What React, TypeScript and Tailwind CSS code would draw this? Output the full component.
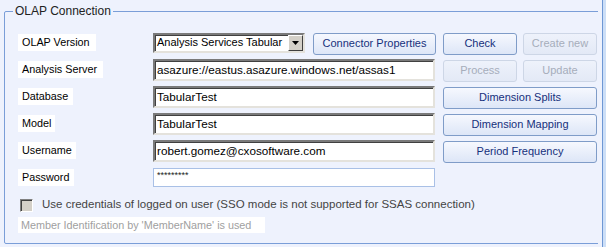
import React from 'react';

const font = { fontFamily: '"Liberation Sans", Arial, sans-serif' };

function Label({ text, w }: { text: string; w: string }) {
  return (
    <div className={`h-[17px] bg-white pl-[4px] text-[10.8px] leading-[17px] text-black whitespace-nowrap ${w}`}>
      {text}
    </div>
  );
}

function SunkenInput({ value }: { value: string }) {
  return (
    <div className="w-[282px] h-[22px] bg-white border-2 border-t-[#7a7a7a] border-l-[#7a7a7a] border-b-[#e4e2dc] border-r-[#e4e2dc] shadow-[inset_1px_1px_0_#404040] pl-[2px] text-[11.7px] leading-[18px] text-black whitespace-nowrap overflow-hidden">
      {value}
    </div>
  );
}

function Btn({ text, w, disabled }: { text: string; w: string; disabled?: boolean }) {
  return (
    <button
      className={`h-[22px] ${w} rounded-[3px] border text-[11px] leading-none ${
        disabled
          ? 'border-[#cdd6e6] bg-gradient-to-b from-[#eef2fb] to-[#e3e9f6] text-[#a6adbb]'
          : 'border-[#7f9cc8] bg-gradient-to-b from-[#f6f8fe] to-[#dde6f7] text-[#16307c]'
      }`}
    >
      {text}
    </button>
  );
}

export default function App() {
  return (
    <div className="flex w-[606px] h-[247px] overflow-hidden" style={font}>
      <div className="w-[602px] h-[247px] bg-[#eef2fd] overflow-hidden">
        <div className="w-[598px] overflow-hidden pl-[4px] pt-[4px]">
          <fieldset className="w-[600px] h-[240px] border border-[#7a9ed8] rounded-[2px]">
            <legend className="ml-[8px] px-[2px] text-[12px] leading-[14px] text-[#222]">OLAP Connection</legend>
            <div className="flex flex-col pt-[11px]">
              {/* row 1 */}
              <div className="flex items-center h-[27px] pl-[13px]">
                <div className="w-[135px]"><Label text="OLAP Version" w="w-[78px]" /></div>
                <div className="w-[152px] h-[20px] bg-white border-2 border-t-[#7a7a7a] border-l-[#7a7a7a] border-b-[#e4e2dc] border-r-[#e4e2dc] shadow-[inset_1px_1px_0_#404040] flex items-center">
                  <span className="flex-1 min-w-0 pl-[2px] text-[11px] text-black whitespace-nowrap">Analysis Services Tabular</span>
                  <span className="shrink-0 w-[15px] h-[16px] bg-[#d4d0c8] border border-t-white border-l-white border-r-[#404040] border-b-[#404040] flex items-center justify-center">
                    <svg width="7" height="4" viewBox="0 0 7 4"><path d="M0 0h7L3.5 4z" fill="#000" /></svg>
                  </span>
                </div>
                <div className="ml-[8px]"><Btn text="Connector Properties" w="w-[123px]" /></div>
                <div className="ml-[7px]"><Btn text="Check" w="w-[74px]" /></div>
                <div className="ml-[6px]"><Btn text="Create new" w="w-[74px]" disabled /></div>
              </div>
              {/* row 2 */}
              <div className="flex items-center h-[27px] pl-[13px]">
                <div className="w-[135px]"><Label text="Analysis Server" w="w-[85px]" /></div>
                <SunkenInput value="asazure://eastus.asazure.windows.net/assas1" />
                <div className="ml-[8px]"><Btn text="Process" w="w-[74px]" disabled /></div>
                <div className="ml-[6px]"><Btn text="Update" w="w-[74px]" disabled /></div>
              </div>
              {/* row 3 */}
              <div className="flex items-center h-[27px] pl-[13px]">
                <div className="w-[135px]"><Label text="Database" w="w-[55px]" /></div>
                <SunkenInput value="TabularTest" />
                <div className="ml-[8px]"><Btn text="Dimension Splits" w="w-[154px]" /></div>
              </div>
              {/* row 4 */}
              <div className="flex items-center h-[27px] pl-[13px]">
                <div className="w-[135px]"><Label text="Model" w="w-[37px]" /></div>
                <SunkenInput value="TabularTest" />
                <div className="ml-[8px]"><Btn text="Dimension Mapping" w="w-[154px]" /></div>
              </div>
              {/* row 5 */}
              <div className="flex items-center h-[27px] pl-[13px]">
                <div className="w-[135px]"><Label text="Username" w="w-[58px]" /></div>
                <SunkenInput value="robert.gomez@cxosoftware.com" />
                <div className="ml-[8px]"><Btn text="Period Frequency" w="w-[154px]" /></div>
              </div>
              {/* row 6 */}
              <div className="flex items-center h-[27px] pl-[13px]">
                <div className="w-[135px]"><Label text="Password" w="w-[56px]" /></div>
                <div className="w-[282px] h-[19px] bg-white border border-[#a9c0e6] pl-[3px] text-[9px] leading-[13px] text-[#222]">
                  *********
                </div>
              </div>
              {/* checkbox */}
              <div className="flex items-center h-[20px] mt-[4px] pl-[15px]">
                <span className="w-[13px] h-[13px] bg-[#d4d0c8] border border-t-[#808080] border-l-[#808080] border-b-white border-r-white shadow-[inset_1px_1px_0_#404040]" />
                <span className="ml-[9px] text-[11.5px] text-[#444] whitespace-nowrap">
                  Use credentials of logged on user (SSO mode is not supported for SSAS connection)
                </span>
              </div>
              <div className="pl-[13px] mt-[2px]">
                <div className="w-[247px] h-[16px] bg-white pl-[3px] text-[10.8px] leading-[16px] text-[#a0a0a0] whitespace-nowrap">
                  Member Identification by 'MemberName' is used
                </div>
              </div>
            </div>
          </fieldset>
        </div>
      </div>
      <div className="w-px bg-[#6f98d4]" />
      <div className="flex-1 bg-[#cddff7]" />
    </div>
  );
}
